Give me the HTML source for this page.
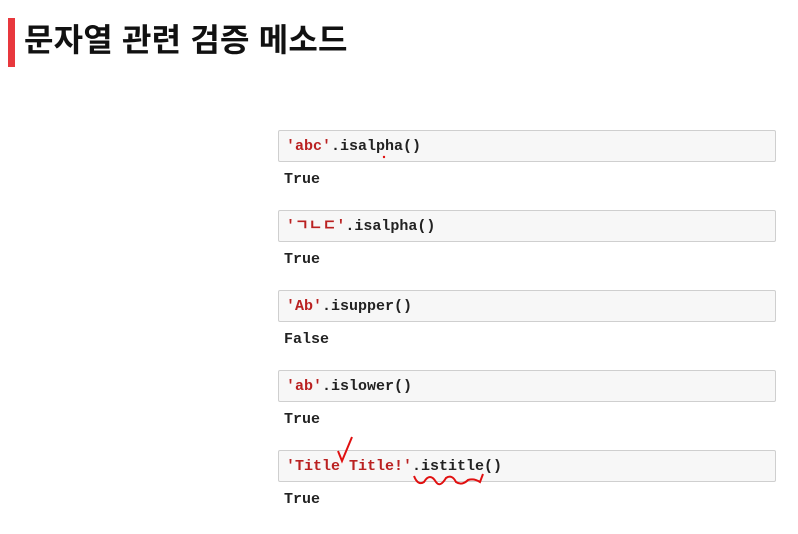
<!DOCTYPE html><html><head><meta charset="utf-8"><style>
body{margin:0;width:798px;height:534px;background:#fff;position:relative;overflow:hidden;font-family:"Liberation Sans","Noto Sans CJK KR",sans-serif}
.bar{position:absolute;left:8px;top:18px;width:7px;height:49px;background:#e8383d}
h1{position:absolute;left:24px;top:17px;margin:0;font-size:32px;font-weight:bold;color:#111;letter-spacing:0.2px;line-height:46px}
.box{position:absolute;left:278px;width:498px;height:32px;background:#f7f7f7;border:1px solid #cfcfcf;border-radius:2px;font:bold 15px "Liberation Mono","Noto Sans CJK KR",monospace;line-height:32px;padding-left:7px;box-sizing:border-box;color:#222}
.s{color:#ba2121}
.out{position:absolute;left:284px;font:bold 15px "Liberation Mono",monospace;color:#222;line-height:18px}
</style></head><body>
<div class="bar"></div>
<h1>문자열 관련 검증 메소드</h1>
<div class="box" style="top:130px"><span class="s">'abc'</span>.isalpha()</div>
<div class="out" style="top:171px">True</div>
<div class="box" style="top:210px"><span class="s">'ㄱㄴㄷ'</span>.isalpha()</div>
<div class="out" style="top:251px">True</div>
<div class="box" style="top:290px"><span class="s">'Ab'</span>.isupper()</div>
<div class="out" style="top:331px">False</div>
<div class="box" style="top:370px"><span class="s">'ab'</span>.islower()</div>
<div class="out" style="top:411px">True</div>
<div class="box" style="top:450px"><span class="s">'Title Title!'</span>.istitle()</div>
<div class="out" style="top:491px">True</div>
<svg style="position:absolute;left:0;top:0" width="798" height="534">
<path d="M338 451 L342 461 L352 437" stroke="#e01010" stroke-width="2" fill="none"/>
<path d="M414 476 Q418 486 424 482 Q430 472 436 482 Q440 488 446 478 Q452 474 456 482 Q462 486 468 480 Q474 478 480 482 L483 474" stroke="#e01010" stroke-width="2" fill="none"/>
<circle cx="384" cy="157" r="1.2" fill="#e01010"/>
</svg>
</body></html>
